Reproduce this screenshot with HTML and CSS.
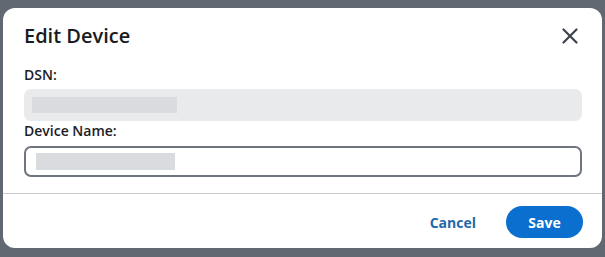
FILE: index.html
```html
<!DOCTYPE html>
<html lang="en">
<head>
<meta charset="utf-8">
<title>Edit Device</title>
<link rel="stylesheet" href="styles.css">
</head>
<body>
<div class="dialog">
  <div class="dialog-header">
    <h1 class="dialog-title">Edit Device</h1>
    <button class="close-btn" aria-label="Close">
      <svg width="16" height="16" viewBox="0 0 16 16"><path d="M1.5 1.5 L14.5 14.5 M14.5 1.5 L1.5 14.5" stroke="#3d434b" stroke-width="2.2" stroke-linecap="round" fill="none"/></svg>
    </button>
  </div>
  <div class="dialog-body">
    <label class="field-label">DSN:</label>
    <div class="readonly-field"><span class="redacted redacted-dsn"></span></div>
    <label class="field-label">Device Name:</label>
    <div class="text-input"><span class="redacted redacted-name"></span></div>
  </div>
  <div class="dialog-footer">
    <button class="btn-link">Cancel</button>
    <button class="btn-primary">Save</button>
  </div>
</div>
</body>
</html>
```
FILE: styles.css
```css
html, body {
  margin: 0;
  padding: 0;
}
body {
  background: #626871;
  font-family: "Open Sans", "Noto Sans", Arial, sans-serif;
  color: #1f2329;
  width: 605px;
  height: 257px;
  overflow: hidden;
}
.dialog {
  margin: 8px 3px 0 3px;
  width: 599px;
  height: 240px;
  background: #ffffff;
  border-radius: 12px;
  display: flex;
  flex-direction: column;
  box-sizing: border-box;
}
.dialog-header {
  display: flex;
  justify-content: space-between;
  align-items: center;
  padding: 14px 24px 0 21px;
}
.dialog-title {
  margin: 0;
  font-size: 20px;
  line-height: 28px;
  font-weight: 600;
  color: #181c22;
}
.close-btn {
  border: none;
  background: none;
  padding: 0;
  width: 16px;
  height: 16px;
  display: flex;
}
.dialog-body {
  padding: 15px 20px 0 21px;
  display: flex;
  flex-direction: column;
}
.field-label {
  font-size: 14px;
  line-height: 20px;
  font-weight: 600;
  color: #1c2026;
}
.readonly-field {
  margin-top: 4px;
  height: 32px;
  background: #e9eaec;
  border-radius: 7px;
  display: flex;
  align-items: center;
  padding-left: 8px;
}
.text-input {
  margin-top: 5px;
  height: 31px;
  box-sizing: border-box;
  border: 2px solid #6f757d;
  border-radius: 7px;
  display: flex;
  align-items: center;
  padding-left: 10px;
}
.redacted {
  display: block;
  height: 16px;
  background: #d9dbde;
}
.redacted-dsn { width: 145px; }
.redacted-name { width: 139px; height: 17px; }
.dialog-footer {
  margin-top: 16px;
  border-top: 1px solid #c9cbce;
  display: flex;
  justify-content: flex-end;
  align-items: center;
  gap: 30px;
  padding: 12px 19px 0 0;
}
.btn-link {
  border: none;
  background: none;
  padding: 0;
  font-family: inherit;
  font-size: 14px;
  font-weight: 700;
  color: #1f6aa8;
}
.btn-primary {
  border: none;
  width: 77px;
  height: 32px;
  border-radius: 16px;
  background: #0b6fcf;
  color: #ffffff;
  font-family: inherit;
  font-size: 14px;
  font-weight: 700;
}
```
